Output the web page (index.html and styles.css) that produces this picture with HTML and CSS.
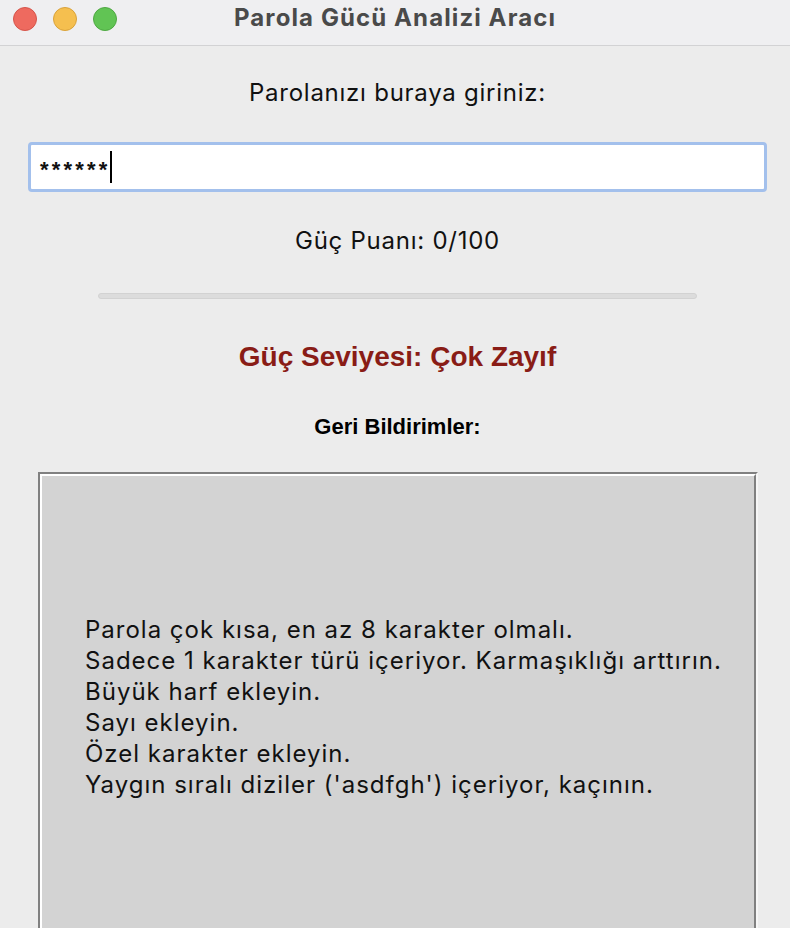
FILE: index.html
```html
<!DOCTYPE html>
<html lang="tr">
<head>
<meta charset="utf-8">
<title>Parola Gücü Analizi Aracı</title>
<link rel="stylesheet" href="styles.css">
</head>
<body>
<div class="window">
  <header class="titlebar">
    <div class="lights">
      <span class="light red"></span>
      <span class="light yellow"></span>
      <span class="light green"></span>
    </div>
    <div class="title">Parola Gücü Analizi Aracı</div>
  </header>
  <main class="content">
    <div class="prompt">Parolanızı buraya giriniz:</div>
    <div class="field"><span class="masked">******</span><span class="caret"></span></div>
    <div class="score">Güç Puanı: 0/100</div>
    <div class="progress"></div>
    <div class="level">Güç Seviyesi: Çok Zayıf</div>
    <div class="fb-title">Geri Bildirimler:</div>
    <div class="fb-box">
      <div class="fb-inner">
        <p class="fb-line">Parola çok kısa, en az 8 karakter olmalı.</p>
        <p class="fb-line">Sadece 1 karakter türü içeriyor. Karmaşıklığı arttırın.</p>
        <p class="fb-line">Büyük harf ekleyin.</p>
        <p class="fb-line">Sayı ekleyin.</p>
        <p class="fb-line">Özel karakter ekleyin.</p>
        <p class="fb-line">Yaygın sıralı diziler ('asdfgh') içeriyor, kaçının.</p>
      </div>
    </div>
  </main>
</div>
</body>
</html>
```

FILE: styles.css
```css
html, body {
  margin: 0;
  padding: 0;
  height: 100%;
  overflow: hidden;
}
body {
  background: #ececec;
  font-family: Inter, "Liberation Sans", Arial, sans-serif;
  color: #111;
}
.window {
  width: 790px;
  height: 928px;
  overflow: hidden;
}
.titlebar {
  height: 45px;
  background: #efeff1;
  border-bottom: 1px solid #d2d2d4;
  display: flex;
  align-items: center;
  position: relative;
}
.lights {
  display: flex;
  gap: 16px;
  padding-left: 13px;
  margin-top: -8px;
}
.light {
  width: 24px;
  height: 24px;
  border-radius: 50%;
  box-sizing: border-box;
}
.red { background: #ee6a5f; border: 1px solid #d5544a; }
.yellow { background: #f5bf4f; border: 1px solid #d9a23a; }
.green { background: #61c454; border: 1px solid #4ea842; }
.title {
  position: absolute;
  left: 0;
  right: 0;
  top: 3px;
  text-align: center;
  font-family: Inter, "Liberation Sans", sans-serif;
  font-weight: bold;
  font-size: 24px;
  line-height: 30px;
  letter-spacing: 1.1px;
  color: #4a4a4a;
}
.content {
  width: 785px;
  padding-left: 5px;
  display: flex;
  flex-direction: column;
  align-items: stretch;
}
.prompt {
  margin-top: 35px;
  font-size: 24px;
  line-height: 24px;
  letter-spacing: 0.75px;
  text-align: center;
}
.field {
  margin: 37px 23px 0 23px;
  height: 50px;
  box-sizing: border-box;
  border: 3px solid #a3c0ec;
  border-radius: 4px;
  background: #fff;
  display: flex;
  align-items: center;
  padding-left: 9px;
}
.masked {
  font-family: "Liberation Sans", Arial, sans-serif;
  font-weight: bold;
  font-size: 22px;
  letter-spacing: 3.2px;
  line-height: 20px;
  padding-top: 6px;
}
.caret {
  display: inline-block;
  width: 2px;
  height: 32px;
  background: #000;
  margin-left: -1px;
}
.score {
  margin-top: 37px;
  font-size: 24px;
  line-height: 24px;
  letter-spacing: 0.75px;
  text-align: center;
}
.progress {
  margin: 40px auto 0 auto;
  width: 599px;
  height: 6px;
  box-sizing: border-box;
  border-radius: 3px;
  background: #dcdcdc;
  border: 1px solid #d2d2d2;
}
.level {
  margin-top: 44px;
  font-family: "Liberation Sans", Arial, sans-serif;
  font-size: 28px;
  line-height: 28px;
  font-weight: bold;
  color: #891c16;
  text-align: center;
}
.fb-title {
  margin-top: 45px;
  font-family: "Liberation Sans", Arial, sans-serif;
  font-size: 22px;
  line-height: 22px;
  font-weight: bold;
  text-align: center;
  color: #000;
}
.fb-box {
  margin: 34px 32px 0 33px;
  border-top: 2px solid #808080;
  border-left: 2px solid #808080;
  border-right: 2px solid #f6f6f6;
  height: 600px;
}
.fb-inner {
  border-top: 2px solid #ffffff;
  border-left: 2px solid #ffffff;
  border-right: 2px solid #808080;
  background: #d3d3d3;
  height: 100%;
  box-sizing: border-box;
  padding: 138px 0 0 43px;
}
.fb-line {
  margin: 0;
  font-size: 24px;
  line-height: 31px;
  letter-spacing: 1px;
  color: #111;
}
```
